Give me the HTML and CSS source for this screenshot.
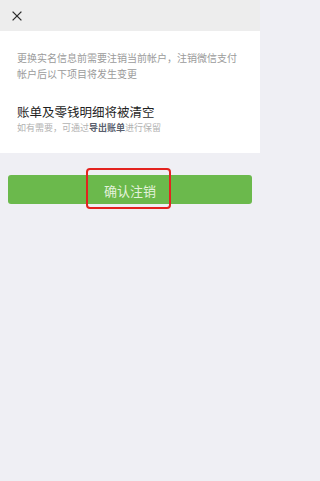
FILE: index.html
```html
<!DOCTYPE html>
<html lang="zh-CN">
<head>
<meta charset="utf-8">
<title>注销</title>
<link rel="stylesheet" href="styles.css">
</head>
<body>
<div class="page">
  <header class="topbar">
    <svg class="close" width="10" height="10" viewBox="0 0 10 10" aria-label="关闭">
      <path d="M0.6 0.6 L9.4 9.4 M9.4 0.6 L0.6 9.4" stroke="#2b2b2b" stroke-width="1.3" fill="none"/>
    </svg>
  </header>
  <section class="card">
    <p class="desc">更换实名信息前需要注销当前帐户，注销微信支付帐户后以下项目将发生变更</p>
    <div class="item">
      <h2 class="item-title">账单及零钱明细将被清空</h2>
      <p class="item-sub">如有需要，可通过<span class="link">导出账单</span>进行保留</p>
    </div>
  </section>
  <div class="actions">
    <div class="btn-wrap">
      <button class="btn">确认注销</button>
      <span class="highlight"></span>
    </div>
  </div>
</div>
</body>
</html>
```

FILE: styles.css
```css
html {
  background: #efeff4;
}
html, body {
  margin: 0;
  padding: 0;
}
body {
  background: #efeff4;
  font-family: "Noto Sans CJK SC", "Noto Sans", sans-serif;
  width: 260px;
  height: 481px;
  overflow: hidden;
}
.page {
  display: flex;
  flex-direction: column;
}
.topbar {
  height: 31px;
  background: #ededed;
  display: flex;
  align-items: center;
  padding-left: 12px;
}
.close {
  display: block;
  width: 10px;
  height: 10px;
  margin-top: 1px;
}
.card {
  background: #ffffff;
  padding: 19px 17px 18px 17px;
}
.desc {
  margin: 0;
  font-size: 10px;
  line-height: 16px;
  color: #9b9b9b;
}
.item {
  margin-top: 21px;
}
.item-title {
  margin: 0;
  font-size: 12.5px;
  line-height: 18px;
  font-weight: normal;
  color: #1f1f1f;
}
.item-sub {
  margin: 0;
  font-size: 9px;
  line-height: 14px;
  color: #b2b2b2;
}
.link {
  color: #5a5f6e;
  font-weight: bold;
}
.actions {
  padding: 22px 8px 0 8px;
}
.btn-wrap {
  position: relative;
}
.btn {
  display: block;
  width: 100%;
  height: 29px;
  border: none;
  border-radius: 3px;
  background: #6bb94c;
  color: #e4f2dc;
  font-family: "Noto Sans CJK SC", "Noto Sans", sans-serif;
  font-size: 13px;
  padding: 0;
  padding-top: 1px;
}
.highlight {
  position: absolute;
  left: 78px;
  top: -7px;
  width: 81px;
  height: 37px;
  border: 2px solid #e3231f;
  border-radius: 4px;
}
```
